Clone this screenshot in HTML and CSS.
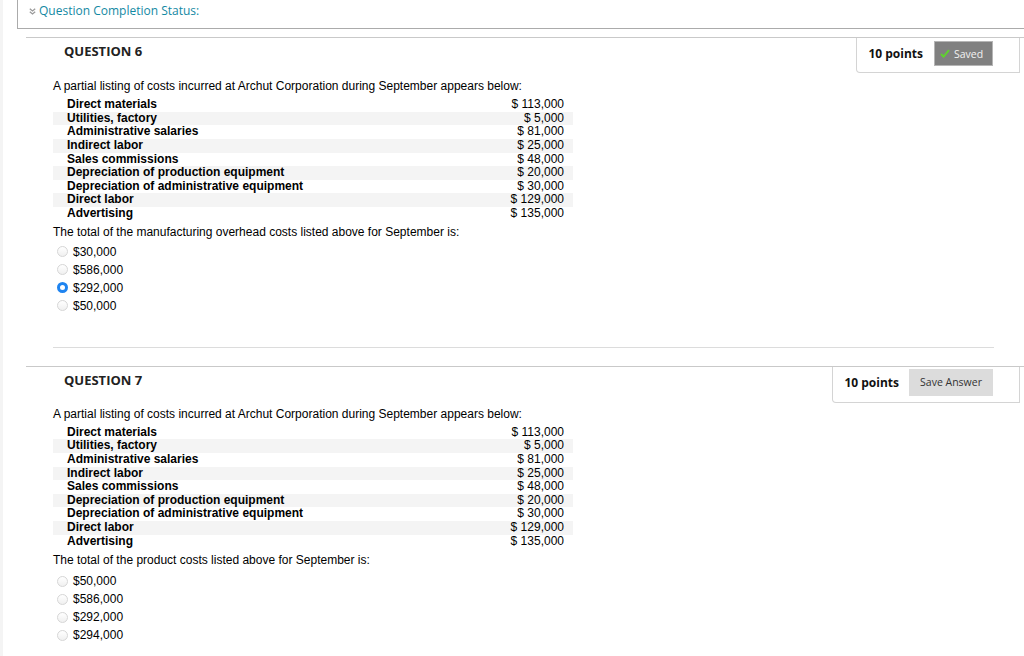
FILE: index.html
```html
<!DOCTYPE html>
<html lang="en">
<head>
<meta charset="utf-8">
<title>Questions</title>
<link rel="stylesheet" href="styles.css">
</head>
<body>
<div class="page">
  <div class="status">
    <svg class="chev" width="7" height="7" viewBox="0 0 7 7"><polyline points="0.8,0.8 3.5,3 6.2,0.8" fill="none" stroke="#9a9a9a" stroke-width="1.3"/><polyline points="0.8,3.8 3.5,6 6.2,3.8" fill="none" stroke="#9a9a9a" stroke-width="1.3"/></svg>
    <span class="status-text">Question Completion Status:</span>
  </div>

  <section class="question">
    <div class="q-head">
      <h3 class="q-title">QUESTION 6</h3>
      <div class="points-box pb6">
        <span class="points">10 points</span>
        <span class="btn btn-saved"><svg class="check" width="10" height="9" viewBox="0 0 10 9"><polyline points="1,5 3.6,7.6 9,1.2" fill="none" stroke="#5fd12f" stroke-width="2"/></svg>Saved</span>
      </div>
    </div>
    <div class="q-body">
      <p class="q-text">A partial listing of costs incurred at Archut Corporation during September appears below:</p>
      <table class="costs">
        <tr><td class="lbl">Direct materials</td><td class="amt">$ 113,000</td></tr>
        <tr class="alt"><td class="lbl">Utilities, factory</td><td class="amt">$ 5,000</td></tr>
        <tr><td class="lbl">Administrative salaries</td><td class="amt">$ 81,000</td></tr>
        <tr class="alt"><td class="lbl">Indirect labor</td><td class="amt">$ 25,000</td></tr>
        <tr><td class="lbl">Sales commissions</td><td class="amt">$ 48,000</td></tr>
        <tr class="alt"><td class="lbl">Depreciation of production equipment</td><td class="amt">$ 20,000</td></tr>
        <tr><td class="lbl">Depreciation of administrative equipment</td><td class="amt">$ 30,000</td></tr>
        <tr class="alt"><td class="lbl">Direct labor</td><td class="amt">$ 129,000</td></tr>
        <tr><td class="lbl">Advertising</td><td class="amt">$ 135,000</td></tr>
      </table>
      <p class="q-text q-ask">The total of the manufacturing overhead costs listed above for September is:</p>
      <ul class="options">
        <li><span class="radio"></span>$30,000</li>
        <li><span class="radio"></span>$586,000</li>
        <li><span class="radio checked"></span>$292,000</li>
        <li><span class="radio"></span>$50,000</li>
      </ul>
    </div>
  </section>

  <section class="question q-next">
    <div class="q-head">
      <h3 class="q-title">QUESTION 7</h3>
      <div class="points-box pb7">
        <span class="points">10 points</span>
        <span class="btn btn-save">Save Answer</span>
      </div>
    </div>
    <div class="q-body">
      <p class="q-text">A partial listing of costs incurred at Archut Corporation during September appears below:</p>
      <table class="costs">
        <tr><td class="lbl">Direct materials</td><td class="amt">$ 113,000</td></tr>
        <tr class="alt"><td class="lbl">Utilities, factory</td><td class="amt">$ 5,000</td></tr>
        <tr><td class="lbl">Administrative salaries</td><td class="amt">$ 81,000</td></tr>
        <tr class="alt"><td class="lbl">Indirect labor</td><td class="amt">$ 25,000</td></tr>
        <tr><td class="lbl">Sales commissions</td><td class="amt">$ 48,000</td></tr>
        <tr class="alt"><td class="lbl">Depreciation of production equipment</td><td class="amt">$ 20,000</td></tr>
        <tr><td class="lbl">Depreciation of administrative equipment</td><td class="amt">$ 30,000</td></tr>
        <tr class="alt"><td class="lbl">Direct labor</td><td class="amt">$ 129,000</td></tr>
        <tr><td class="lbl">Advertising</td><td class="amt">$ 135,000</td></tr>
      </table>
      <p class="q-text q-ask">The total of the product costs listed above for September is:</p>
      <ul class="options">
        <li><span class="radio"></span>$50,000</li>
        <li><span class="radio"></span>$586,000</li>
        <li><span class="radio"></span>$292,000</li>
        <li><span class="radio"></span>$294,000</li>
      </ul>
    </div>
  </section>
</div>
</body>
</html>
```

FILE: styles.css
```css
html, body {
  margin: 0;
  padding: 0;
  background: #fff;
}
body {
  font-family: "Liberation Sans", Arial, sans-serif;
  color: #000;
  overflow: hidden;
}
.page {
  border-left: 3px solid #f4f4f4;
  min-height: 656px;
  box-sizing: border-box;
}
.status {
  box-sizing: border-box;
  height: 29px;
  margin-left: 14px;
  border-left: 1px solid #ababab;
  border-bottom: 1px solid #ababab;
  padding: 3px 0 0 11px;
  display: flex;
  align-items: flex-start;
  gap: 3px;
}
.chev {
  margin-top: 5px;
}
.status-text {
  font-family: "Open Sans", sans-serif;
  font-size: 12px;
  line-height: 16px;
  color: #1389a3;
}
.question {
  margin-top: 8px;
  margin-left: 23px;
  border-top: 1px solid #c9c9c9;
}
.q-next {
  margin-top: 18px;
}
.q-head {
  display: flex;
  justify-content: space-between;
  align-items: flex-start;
}
.q-title {
  margin: 0;
  padding: 4px 0 0 38px;
  font-family: "Open Sans", sans-serif;
  font-weight: 700;
  font-size: 13px;
  line-height: 18px;
  color: #222;
}
.points-box {
  margin-right: 4px;
  display: flex;
  align-items: center;
  gap: 11px;
  border: 1px solid #d4d4d4;
  border-top: none;
  border-bottom-left-radius: 4px;
  padding: 3px 26px 6px 11px;
}
.pb7 {
  padding-top: 2px;
  gap: 10px;
}
.points {
  font-family: "Open Sans", sans-serif;
  font-weight: 700;
  font-size: 12px;
  color: #111;
}
.btn {
  font-family: "Open Sans", sans-serif;
  font-size: 10.5px;
  box-sizing: border-box;
  display: flex;
  align-items: center;
}
.btn-saved {
  height: 25px;
  width: 59px;
  padding: 0 0 0 5px;
  gap: 4px;
  background: #808080;
  border: 1px solid #b5b5b5;
  color: #f2f2f2;
}
.btn-save {
  height: 27px;
  width: 84px;
  justify-content: center;
  background: #dcdcdc;
  color: #333;
}
.q-body {
  margin: 6px 30px 0 27px;
  padding-bottom: 32px;
  border-bottom: 1px solid #dcdcdc;
}
.q-next .q-body {
  margin-top: 4px;
}
.q-text {
  margin: 0;
  font-size: 12px;
  line-height: 14px;
}
.q-ask {
  margin-top: 4px;
}
.q-next .q-ask {
  margin-top: 5px;
}
.costs {
  margin-top: 5px;
  width: 520px;
  border-collapse: collapse;
  font-size: 12px;
}
.costs td {
  padding: 0;
  line-height: 13.625px;
  height: 13.625px;
}
.costs .alt td {
  background: #f4f4f4;
}
.lbl {
  font-weight: 700;
  padding-left: 14px !important;
}
.amt {
  text-align: right;
  padding-right: 9px !important;
}
.options {
  list-style: none;
  margin: 4px 0 0;
  padding: 0;
}
.q-next .options {
  margin-top: 5px;
}
.options li {
  display: flex;
  align-items: center;
  gap: 5px;
  padding-left: 4px;
  font-size: 12px;
  line-height: 18px;
  height: 18px;
}
.radio {
  box-sizing: border-box;
  width: 11px;
  height: 11px;
  border-radius: 50%;
  border: 1px solid #d6d6d6;
  background: linear-gradient(#fff, #f0f0f0);
  flex: none;
}
.radio.checked {
  border: 3.5px solid #1f84f0;
  background: #fff;
}
```
